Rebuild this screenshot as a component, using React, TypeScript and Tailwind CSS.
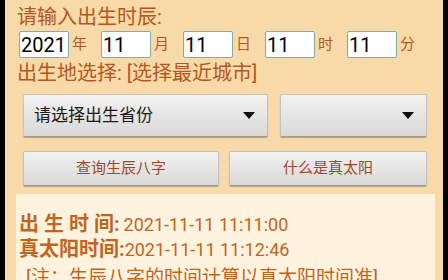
import React from 'react'

const font = { fontFamily: 'Roboto, "Noto Sans CJK SC", sans-serif' }

function DateBox({ value, unit }: { value: string; unit: string }) {
  return (
    <div className="flex items-center">
      <div className="w-[50px] h-[27px] bg-white border border-[#86aba6] rounded-[2px] flex items-center pl-[1px] text-[20px] leading-none text-black">
        {value}
      </div>
      <span className="ml-[3px] w-[29px] text-[15px] leading-none text-[#b8571d]">{unit}</span>
    </div>
  )
}

function Spinner({ label, className }: { label?: string; className: string }) {
  return (
    <div
      className={`${className} h-[43px] flex items-center justify-between pl-[10px] pr-[12px] rounded-[2px] border border-[#c2c2c2] border-b-[#9a9a9a] bg-gradient-to-b from-[#f2f2f2] to-[#d8d8d8] shadow-[0_1px_1px_rgba(0,0,0,0.25)]`}
    >
      <span className="text-[17px] text-[#1a1a1a]">{label}</span>
      <svg width="12" height="7" viewBox="0 0 12 7">
        <path d="M0 0 H12 L6 7 Z" fill="#111" />
      </svg>
    </div>
  )
}

export default function App() {
  return (
    <div className="w-[448px] h-[280px] overflow-hidden bg-black flex px-[5px]" style={font}>
      <div className="relative flex-1 bg-[#f8d9a8] flex flex-col">

        {/* Birth time */}
        <div className="pl-[12px] pt-[5px] text-[20px] leading-[24px] text-[#b5571f]">请输入出生时辰:</div>
        <div className="pl-[14px] mt-[2px] flex">
          <DateBox value="2021" unit="年" />
          <DateBox value="11" unit="月" />
          <DateBox value="11" unit="日" />
          <DateBox value="11" unit="时" />
          <DateBox value="11" unit="分" />
        </div>
        <div className="pl-[12px] mt-[3px] text-[20px] leading-[24px] text-[#b5571f]">出生地选择: [选择最近城市]</div>

        {/* Province / city */}
        <div className="pl-[18px] mt-[9px] flex gap-[12px]">
          <Spinner label="请选择出生省份" className="w-[245px]" />
          <Spinner className="w-[147px]" />
        </div>

        {/* Buttons */}
        <div className="pl-[18px] mt-[14px] flex gap-[10px]">
          <button className="w-[196px] h-[35px] rounded-[2px] border border-[#c2c2c2] border-b-[#9a9a9a] bg-gradient-to-b from-[#f2f2f2] to-[#d8d8d8] shadow-[0_1px_1px_rgba(0,0,0,0.25)] text-[15px] text-[#a3481b]">
            查询生辰八字
          </button>
          <button className="w-[198px] h-[35px] rounded-[2px] border border-[#c2c2c2] border-b-[#9a9a9a] bg-gradient-to-b from-[#f2f2f2] to-[#d8d8d8] shadow-[0_1px_1px_rgba(0,0,0,0.25)] text-[15px] text-[#a3481b]">
            什么是真太阳
          </button>
        </div>

        {/* Result */}
        <div className="ml-[11px] mr-[8px] mt-[8px] flex-1 bg-[#fff3e0] pl-[3px] pt-[18px] text-[#c2651c]">
          <div className="flex items-baseline leading-[24px]">
            <span className="text-[20px] font-bold">出 生 时 间:</span>
            <span className="ml-[4px] text-[18px]">2021-11-11 11:11:00</span>
          </div>
          <div className="flex items-baseline leading-[24px]">
            <span className="text-[20px] font-bold">真太阳时间:</span>
            <span className="text-[18px]">2021-11-11 11:12:46</span>
          </div>
          <div className="pl-[7px] mt-[4px] text-[19px] leading-[24px] whitespace-nowrap">[注：生辰八字的时间计算以真太阳时间准]</div>
        </div>
      </div>
    </div>
  )
}
